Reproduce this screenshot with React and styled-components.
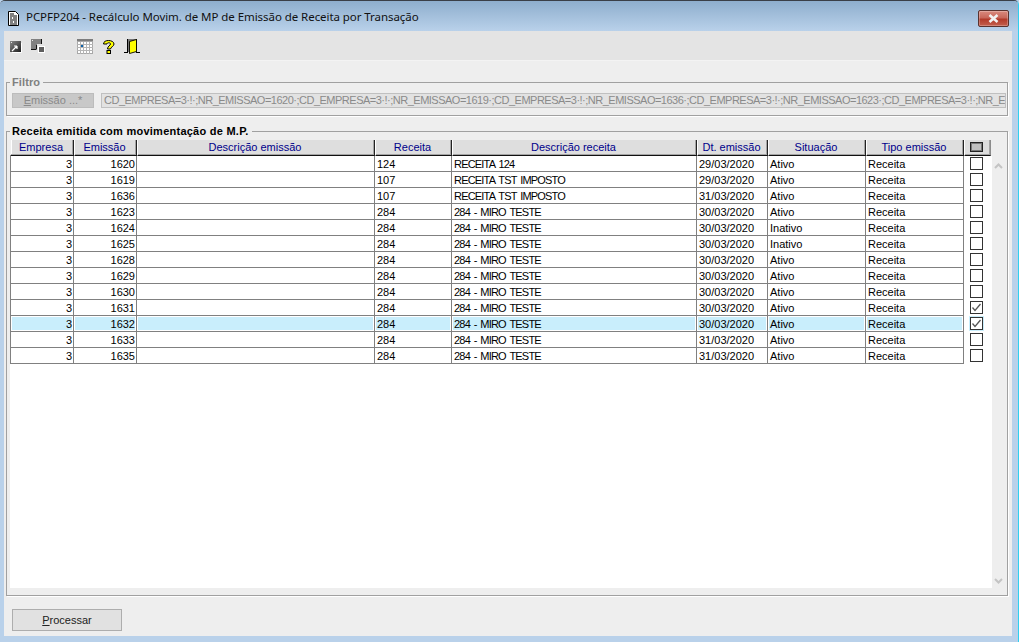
import React from 'react';
import styled, { createGlobalStyle } from 'styled-components';

const GlobalStyle = createGlobalStyle`
  html, body { margin: 0; padding: 0; background: #b9d1ea; }
  body { font-family: "Liberation Sans", Arial, sans-serif; font-size: 11px; overflow: hidden; }
`;

const Win = styled.div`
  width: 1019px;
  height: 642px;
  box-sizing: border-box;
  display: flex;
  flex-direction: column;
  background: #b9d1ea;
  border-top: 1px solid #3a3f47;
  border-right: 1px solid #2fd0f0;
  border-radius: 5px 5px 0 0;
  overflow: hidden;
`;

const TitleBar = styled.div`
  height: 30px;
  flex: none;
  display: flex;
  align-items: center;
  padding: 0 9px 0 8px;
  background: linear-gradient(#8eaecd, #b9d1ea);
  gap: 7px;
`;

const TitleText = styled.span`
  flex: 1;
  font-family: "Noto Sans", sans-serif;
  font-size: 11.5px;
  letter-spacing: -0.06px;
  color: #111;
  white-space: nowrap;
`;

const CloseButton = styled.div`
  width: 31px;
  height: 17px;
  align-self: flex-start;
  margin-top: 9px;
  box-sizing: border-box;
  border: 1px solid #5a322e;
  border-radius: 2px;
  background: linear-gradient(#d98a7e 0%, #c8675a 45%, #b23a2a 55%, #c4604e 100%);
  box-shadow: inset 0 0 0 1px rgba(255, 255, 255, 0.25);
  display: flex;
  align-items: center;
  justify-content: center;
`;

const Body = styled.div`
  flex: 1;
  margin: 0 0 6px 4px;
  min-height: 0;
  width: 1008px;
  background: #eeeeee;
  display: flex;
  flex-direction: column;
`;

const Toolbar = styled.div`
  height: 29px;
  flex: none;
  box-sizing: border-box;
  background: #e4e4e4;
  box-shadow: 0 1px 0 #f3f3f3;
  display: flex;
  align-items: flex-start;
  padding: 7px 0 0 4px;
`;

const ToolIcon = styled.svg`
  width: 16px;
  height: 16px;
  flex: none;
  margin-left: ${({ $gap }) => $gap || 0}px;
`;

const Group = styled.fieldset`
  margin: ${({ $top }) => $top}px 4px 0 2px;
  padding: 0;
  min-width: 0;
  box-sizing: border-box;
  flex: none;
  height: ${({ $height }) => $height}px;
  border: 1px solid #a0a0a0;
  box-shadow: 1px 1px 0 #fff;
`;

const Legend = styled.legend`
  margin-left: 3px;
  padding: 0 3px 0 2px;
  font-weight: bold;
  font-size: 11px;
  line-height: 11px;
  letter-spacing: ${({ $muted }) => ($muted ? '0.1px' : '0.25px')};
  color: ${({ $muted }) => ($muted ? '#808080' : '#000')};
`;

const FilterRow = styled.div`
  display: flex;
  align-items: center;
  gap: 7px;
  padding: 5px 1px 0 5px;
`;

const FilterButton = styled.div`
  width: 82px;
  height: 15px;
  box-sizing: border-box;
  flex: none;
  background: #c8c8c8;
  border: 1px solid #bcbcbc;
  color: #8a8a8a;
  text-align: center;
  line-height: 13px;
`;

const FilterInput = styled.div`
  flex: 1;
  min-width: 0;
  height: 15px;
  box-sizing: border-box;
  background: #e2e2e2;
  border: 1px solid #c0c0c0;
  color: #8a8a8a;
  line-height: 13px;
  letter-spacing: -0.5px;
  padding-left: 2px;
  white-space: nowrap;
  overflow: hidden;
`;

const GridRow = styled.div`
  display: flex;
  padding: 0 0 0 3px;
  height: 448px;
  margin-top: 3px;
`;

const GridMain = styled.div`
  width: 982px;
  height: 100%;
  flex: none;
  background: linear-gradient(#fff, #fff) no-repeat 0 16px / 100% 432px;
`;

const Table = styled.table`
  border-collapse: separate;
  border-spacing: 0;
  table-layout: fixed;
  width: 981px;
`;

const Head = styled.th`
  height: 16px;
  padding: 0 2px 0 0;
  box-sizing: border-box;
  background: #dedede;
  border-left: 1px solid #fff;
  border-right: 1px solid #222;
  border-bottom: 1px solid #111;
  box-shadow: inset -1px -1px 0 #a4a4a4;
  color: #00008b;
  font-weight: normal;
  font-size: 11px;
  text-align: center;
  line-height: 13px;

  &:first-child {
    border-left-color: #eeeeee;
    box-shadow: inset -1px -1px 0 #a4a4a4, inset 1px 0 0 #fff;
  }
`;

const CheckHead = styled(Head)`
  border-right-color: #8c8c8c;
`;

const HeadBox = styled.div`
  width: 13px;
  height: 10px;
  box-sizing: border-box;
  margin: 0 0 1px 5px;
  background: #c0c0c0;
  border: 1px solid #222;
  box-shadow: inset 0 0 0 1px #777;
`;

const Cell = styled.td`
  height: 16px;
  padding: 0 1px 0 2px;
  box-sizing: border-box;
  background: ${({ $selected }) => ($selected ? '#c9eefc' : '#fff')};
  border-right: 1px solid #808080;
  border-bottom: 1px solid #808080;
  box-shadow: ${({ $selected }) => ($selected ? 'inset 0 0 0 1px #fff' : 'none')};
  color: #000;
  font-size: 11px;
  line-height: 14px;
  letter-spacing: ${({ $tight }) => ($tight ? '-0.8px' : '0')};
  word-spacing: ${({ $tight }) => ($tight ? '1.5px' : '0')};
  text-align: ${({ $right }) => ($right ? 'right' : 'left')};
  white-space: nowrap;
  overflow: hidden;

  &:first-child {
    border-left: 1px solid #808080;
  }
`;

const CheckCell = styled.td`
  height: 16px;
  padding: 0;
  background: #fff;
  vertical-align: top;
`;

const CheckBox = styled.div`
  width: 13px;
  height: 13px;
  box-sizing: border-box;
  margin: 1px 0 0 6px;
  background: #fff;
  border: 1px solid #333;
  box-shadow: ${({ $selected }) => ($selected ? '0 0 0 1px #c9eefc' : 'none')};
`;

const ScrollBar = styled.div`
  width: 12px;
  flex: none;
  margin-top: 16px;
  display: flex;
  flex-direction: column;
  justify-content: space-between;
  align-items: center;
  padding: 7px 0 4px;
  box-sizing: border-box;
  height: 432px;
`;

const Footer = styled.div`
  padding: 13px 0 0 8px;
`;

const ProcessButton = styled.div`
  width: 110px;
  height: 22px;
  box-sizing: border-box;
  background: #e1e1e1;
  border: 1px solid #adadad;
  color: #222;
  text-align: center;
  line-height: 20px;
`;

const columns = [
  { key: 'empresa', label: 'Empresa', width: 64, right: true },
  { key: 'emissao', label: 'Emissão', width: 63, right: true },
  { key: 'desc', label: 'Descrição emissão', width: 238 },
  { key: 'receita', label: 'Receita', width: 77 },
  { key: 'descReceita', label: 'Descrição receita', width: 245, tight: true },
  { key: 'data', label: 'Dt. emissão', width: 71 },
  { key: 'situacao', label: 'Situação', width: 98 },
  { key: 'tipo', label: 'Tipo emissão', width: 98 },
];

const row = (emissao, receita, descReceita, data, situacao = 'Ativo', extra = {}) => ({
  empresa: '3', emissao, desc: '', receita, descReceita, data, situacao, tipo: 'Receita', ...extra,
});

const rows = [
  row('1620', '124', 'RECEITA 124', '29/03/2020'),
  row('1619', '107', 'RECEITA TST IMPOSTO', '29/03/2020'),
  row('1636', '107', 'RECEITA TST IMPOSTO', '31/03/2020'),
  row('1623', '284', '284 - MIRO TESTE', '30/03/2020'),
  row('1624', '284', '284 - MIRO TESTE', '30/03/2020', 'Inativo'),
  row('1625', '284', '284 - MIRO TESTE', '30/03/2020', 'Inativo'),
  row('1628', '284', '284 - MIRO TESTE', '30/03/2020'),
  row('1629', '284', '284 - MIRO TESTE', '30/03/2020'),
  row('1630', '284', '284 - MIRO TESTE', '30/03/2020'),
  row('1631', '284', '284 - MIRO TESTE', '30/03/2020', 'Ativo', { checked: true }),
  row('1632', '284', '284 - MIRO TESTE', '30/03/2020', 'Ativo', { checked: true, selected: true }),
  row('1633', '284', '284 - MIRO TESTE', '31/03/2020'),
  row('1635', '284', '284 - MIRO TESTE', '31/03/2020'),
];

const filtro = 'CD_EMPRESA=3·!·;NR_EMISSAO=1620·;CD_EMPRESA=3·!·;NR_EMISSAO=1619·;CD_EMPRESA=3·!·;NR_EMISSAO=1636·;CD_EMPRESA=3·!·;NR_EMISSAO=1623·;CD_EMPRESA=3·!·;NR_E';

const Chevron = ({ down }) => (
  <svg width="9" height="6" viewBox="0 0 9 6">
    <path d={down ? 'M1 1l3.5 3.5L8 1' : 'M1 5l3.5-3.5L8 5'} fill="none" stroke="#c4c4c4" strokeWidth="2" />
  </svg>
);

const DocIcon = () => (
  <svg width="11" height="15" viewBox="0 0 11 15" style={{ flex: 'none', marginTop: 4 }}>
    <path d="M.5.5h7l3 3v11H.5z" fill="#fff" stroke="#000" />
    <path d="M2 3h4M2 5h7M2 7h2M5 7h4M2 9h7M2 11h3M6 11h3M2 13h7" stroke="#000" />
  </svg>
);

export default function App() {
  return (
    <Win>
      <GlobalStyle />
      <TitleBar>
        <DocIcon />
        <TitleText>PCPFP204 - Recálculo Movim. de MP de Emissão de Receita por Transação</TitleText>
        <CloseButton>
          <svg width="13" height="9" viewBox="0 0 13 9">
            <path d="M2.500 1l8 7M10.500 1l-8 7" stroke="#f2f2f2" strokeWidth="2.600" />
          </svg>
        </CloseButton>
      </TitleBar>
      <Body>
        <Toolbar>
          <ToolIcon viewBox="0 0 16 16">
            <defs>
              <linearGradient id="squareFill" x1="0" y1="0" x2="1" y2="1">
                <stop offset="0" stopColor="#8a8a8a" />
                <stop offset="1" stopColor="#1c1c1c" />
              </linearGradient>
            </defs>
            <rect x="2" y="3" width="11" height="11" fill="url(#squareFill)" />
            <path d="M3 4h1v1H3z" fill="#e8e8e8" />
            <path d="M4 13l5-5M9 8H6M9 8v3" stroke="#fff" strokeWidth="1.200" fill="none" />
            <path d="M13.500 5v9.500H4" stroke="#fff" fill="none" />
          </ToolIcon>
          <ToolIcon viewBox="0 0 16 16" $gap={6}>
            <path d="M1 1h10v5H6v5H1z" fill="#808080" />
            <path d="M2 2h1v1H2z" fill="#e8e8e8" />
            <path d="M11.500 1v5M6.500 6.500v5M1 11.500h5" stroke="#111" fill="none" />
            <rect x="8.500" y="8.500" width="6" height="6" fill="#5e5e5e" stroke="#fff" />
          </ToolIcon>
          <ToolIcon viewBox="0 0 16 16" $gap={31}>
            <rect x="0" y="1" width="16" height="3" fill="#7d7d7d" />
            <rect x=".5" y="3.500" width="15" height="12" fill="#fff" stroke="#a8a8a8" />
            <path d="M3.500 4v12M6.500 4v12M9.500 4v12M12.500 4v12M0 6.500h16M0 9.500h16M0 12.500h16" stroke="#b4b4b4" />
            <rect x="4" y="7" width="2" height="2" fill="#0a5fa8" />
          </ToolIcon>
          <ToolIcon viewBox="0 0 16 16" $gap={8}>
            <path d="M2.500 6C2.500 3.500 5 2.500 7.500 2.500S13 3.700 13 6c0 2.500-3.500 3-3.500 5H6.500c0-3 3-3.500 3-5 0-.8-.8-1.200-1.800-1.200S6 5.200 6 6z" fill="#ffff00" stroke="#000" />
            <rect x="6" y="12.500" width="3.500" height="3" fill="#ffff00" stroke="#000" />
          </ToolIcon>
          <ToolIcon viewBox="0 0 16 16" $gap={7}>
            <path d="M0 14.500h4M12 14.500h4" stroke="#000" />
            <rect x="4" y="1" width="8" height="13" fill="#777" />
            <path d="M3.500 14V1M12.500 1v14" stroke="#000" />
            <path d="M5.500 3.500l7-2v12l-7 2z" fill="#ffff00" stroke="#000" strokeWidth=".9" />
          </ToolIcon>
        </Toolbar>
        <Group $top={17} $height={39}>
          <Legend $muted>Filtro</Legend>
          <FilterRow>
            <FilterButton><u>E</u>missão ...*</FilterButton>
            <FilterInput>{filtro}</FilterInput>
          </FilterRow>
        </Group>
        <Group $top={10} $height={470}>
          <Legend>Receita emitida com movimentação de M.P.</Legend>
          <GridRow>
            <GridMain>
              <Table>
                <colgroup>
                  {columns.map((c) => <col key={c.key} style={{ width: c.width }} />)}
                  <col style={{ width: 27 }} />
                </colgroup>
                <thead>
                  <tr>
                    {columns.map((c) => <Head key={c.key}>{c.label}</Head>)}
                    <CheckHead><HeadBox /></CheckHead>
                  </tr>
                </thead>
                <tbody>
                  {rows.map((r) => (
                    <tr key={r.emissao}>
                      {columns.map((c) => (
                        <Cell key={c.key} $right={c.right} $tight={c.tight} $selected={r.selected}>{r[c.key]}</Cell>
                      ))}
                      <CheckCell>
                        <CheckBox $selected={r.selected}>
                          {r.checked && (
                            <svg width="11" height="11" viewBox="0 0 11 11" style={{ display: 'block' }}>
                              <path d="M1.500 5.500L4 8.500 9.500 2" fill="none" stroke="#555" strokeWidth="1.300" />
                            </svg>
                          )}
                        </CheckBox>
                      </CheckCell>
                    </tr>
                  ))}
                </tbody>
              </Table>
            </GridMain>
            <ScrollBar>
              <Chevron />
              <Chevron down />
            </ScrollBar>
          </GridRow>
        </Group>
        <Footer>
          <ProcessButton><u>P</u>rocessar</ProcessButton>
        </Footer>
      </Body>
    </Win>
  );
}
